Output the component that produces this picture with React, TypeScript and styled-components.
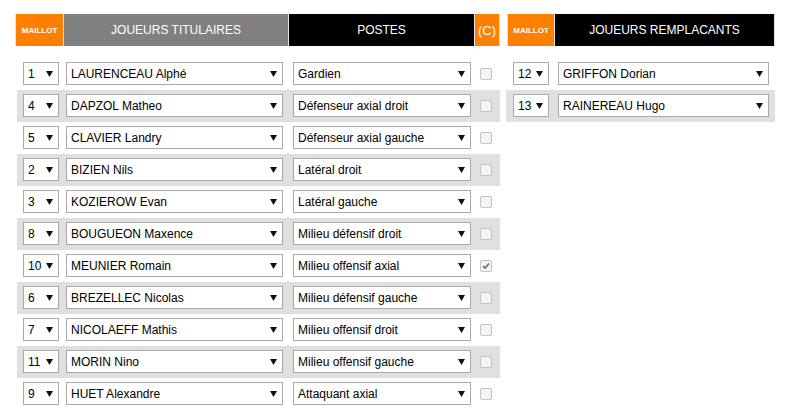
import React from 'react'
import styled, { createGlobalStyle } from 'styled-components'

const GlobalStyle = createGlobalStyle`
    html, body {
        margin: 0;
        padding: 0;
        background: #ffffff;
    }
    body {
        font-family: "Liberation Sans", Arial, sans-serif;
        color: #000;
    }
`

type Starter = { num: string; name: string; post: string; captain?: boolean }

const starters: Starter[] = [
    { num: '1', name: 'LAURENCEAU Alphé', post: 'Gardien' },
    { num: '4', name: 'DAPZOL Matheo', post: 'Défenseur axial droit' },
    { num: '5', name: 'CLAVIER Landry', post: 'Défenseur axial gauche' },
    { num: '2', name: 'BIZIEN Nils', post: 'Latéral droit' },
    { num: '3', name: 'KOZIEROW Evan', post: 'Latéral gauche' },
    { num: '8', name: 'BOUGUEON Maxence', post: 'Milieu défensif droit' },
    { num: '10', name: 'MEUNIER Romain', post: 'Milieu offensif axial', captain: true },
    { num: '6', name: 'BREZELLEC Nicolas', post: 'Milieu défensif gauche' },
    { num: '7', name: 'NICOLAEFF Mathis', post: 'Milieu offensif droit' },
    { num: '11', name: 'MORIN Nino', post: 'Milieu offensif gauche' },
    { num: '9', name: 'HUET Alexandre', post: 'Attaquant axial' },
]

const subs = [
    { num: '12', name: 'GRIFFON Dorian' },
    { num: '13', name: 'RAINEREAU Hugo' },
]

const Page = styled.div`
    display: flex;
    align-items: flex-start;
    gap: 6px;
    padding: 14px 0 0 15px;
`

const Block = styled.section<{ $width: number }>`
    width: ${(p) => p.$width}px;
    display: flex;
    flex-direction: column;
`

const HeadRow = styled.div<{ $cols: string; $offset?: number }>`
    display: grid;
    grid-template-columns: ${(p) => p.$cols};
    gap: 1px;
    height: 32px;
    padding-left: 1px;
    margin-left: ${(p) => p.$offset ?? 0}px;
    background: #e2e2e2;
`

const HeadCell = styled.div<{ $bg: string; $size?: number; $bold?: boolean }>`
    background: ${(p) => p.$bg};
    color: #ffffff;
    font-size: ${(p) => p.$size ?? 12}px;
    font-weight: ${(p) => (p.$bold ? 'bold' : 'normal')};
    display: flex;
    align-items: center;
    justify-content: center;
    white-space: nowrap;
`

const Rows = styled.div<{ $offset: number }>`
    margin-top: 12px;
    margin-left: ${(p) => p.$offset}px;
    display: flex;
    flex-direction: column;
`

const Row = styled.div<{ $shade: boolean; $pad: number }>`
    display: flex;
    align-items: flex-start;
    height: 32px;
    box-sizing: border-box;
    padding: 4px 0 0 ${(p) => p.$pad}px;
    background: ${(p) => (p.$shade ? '#e0e0e0' : 'transparent')};
`

const SelectBox = styled.div<{ $width: number; $gap?: number }>`
    width: ${(p) => p.$width}px;
    height: 23px;
    box-sizing: border-box;
    margin-left: ${(p) => p.$gap ?? 0}px;
    border: 1px solid #a9a9a9;
    background: #ffffff;
    display: flex;
    align-items: center;
    justify-content: space-between;
    padding: 0 5px 0 4px;
    font-size: 12px;
    color: #000;
    white-space: nowrap;
    overflow: hidden;
`

const Arrow = styled.svg`
    flex: none;
    width: 7px;
    height: 6px;
`

const Check = styled.span<{ $gap: number }>`
    margin: 6px 0 0 ${(p) => p.$gap}px;
    width: 12px;
    height: 12px;
    box-sizing: border-box;
    border: 1px solid #c3c3c3;
    border-radius: 2px;
    background: #f4f4f4;
    display: flex;
    align-items: center;
    justify-content: center;
`

const Select: React.FC<{ value: string; width: number; gap?: number }> = ({ value, width, gap }) => (
    <SelectBox $width={width} $gap={gap}>
        <span>{value}</span>
        <Arrow viewBox="0 0 7 6">
            <polygon points="0,0 7,0 3.5,6" fill="#111" />
        </Arrow>
    </SelectBox>
)

const Captain: React.FC<{ checked?: boolean }> = ({ checked }) => (
    <Check $gap={9}>
        {checked && (
            <svg width="8" height="8" viewBox="0 0 8 8">
                <path d="M1 4.2 L3.1 6.2 L7 1.6" stroke="#6a6a6a" strokeWidth="1.6" fill="none" />
            </svg>
        )}
    </Check>
)

export default function App() {
    return (
        <>
            <GlobalStyle />
            <Page>
                <Block $width={485}>
                    <HeadRow $cols="47px 224px 185px 24px">
                        <HeadCell $bg="#ff8000" $size={8} $bold>
                            MAILLOT
                        </HeadCell>
                        <HeadCell $bg="#808080">JOUEURS TITULAIRES</HeadCell>
                        <HeadCell $bg="#000000">POSTES</HeadCell>
                        <HeadCell $bg="#ff8000" $size={13}>
                            (C)
                        </HeadCell>
                    </HeadRow>
                    <Rows $offset={2}>
                        {starters.map((s, i) => (
                            <Row key={s.num} $shade={i % 2 === 1} $pad={6}>
                                <Select value={s.num} width={36} />
                                <Select value={s.name} width={217} gap={7} />
                                <Select value={s.post} width={178} gap={10} />
                                <Captain checked={s.captain} />
                            </Row>
                        ))}
                    </Rows>
                </Block>
                <Block $width={269}>
                    <HeadRow $cols="46px 219px" $offset={1}>
                        <HeadCell $bg="#ff8000" $size={8} $bold>
                            MAILLOT
                        </HeadCell>
                        <HeadCell $bg="#000000">JOUEURS REMPLACANTS</HeadCell>
                    </HeadRow>
                    <Rows $offset={0}>
                        {subs.map((s, i) => (
                            <Row key={s.num} $shade={i % 2 === 1} $pad={7}>
                                <Select value={s.num} width={36} />
                                <Select value={s.name} width={211} gap={9} />
                            </Row>
                        ))}
                    </Rows>
                </Block>
            </Page>
        </>
    )
}
